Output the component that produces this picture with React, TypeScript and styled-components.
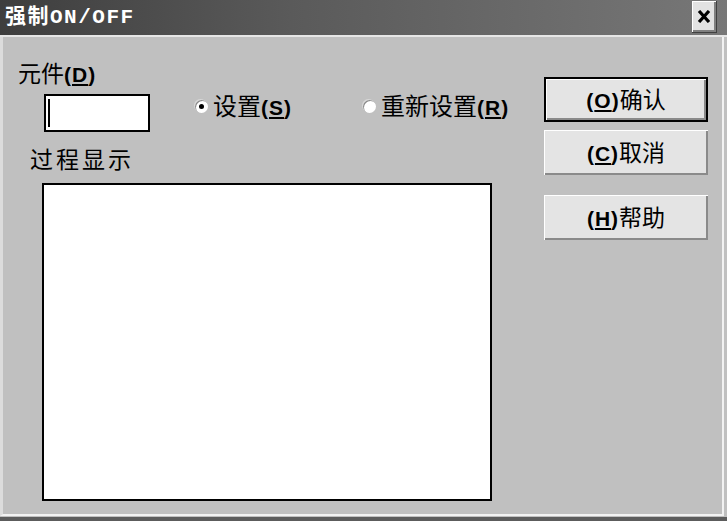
import styled, { createGlobalStyle } from "styled-components";

const GlobalStyle = createGlobalStyle`
  html, body {
    margin: 0;
    padding: 0;
    background: #c0c0c0;
  }
  body {
    font-family: "Noto Sans CJK SC", "Liberation Sans", sans-serif;
    color: #000;
  }
`;

const Window = styled.div`
  width: 727px;
  height: 521px;
  box-sizing: border-box;
  display: flex;
  flex-direction: column;
  background: #c0c0c0;
  border-bottom: 4px solid #5c5c5c;
  overflow: hidden;
`;

const TitleBar = styled.div`
  height: 37px;
  flex-shrink: 0;
  box-sizing: border-box;
  display: flex;
  align-items: flex-start;
  justify-content: space-between;
  padding: 1px 10px 0 5px;
  background: linear-gradient(to right, #3e3e3e, #5a5a5a 40%, #777);
  border-bottom: 2px solid #e6e6e6;
`;

const Title = styled.span`
  margin-top: 5px;
  color: #fff;
  font-family: "Liberation Mono", "Noto Sans CJK SC", monospace;
  font-weight: bold;
  font-size: 21px;
  line-height: 24px;
  letter-spacing: 1.5px;
`;

const CloseButton = styled.div`
  width: 25px;
  height: 32px;
  box-sizing: border-box;
  display: flex;
  align-items: center;
  justify-content: center;
  background: #e2e2e2;
  box-shadow: inset 1px 1px 0 #fff, inset -2px -2px 0 #808080;
  border-right: 1px solid #404040;
  border-bottom: 1px solid #404040;
`;

const Body = styled.div`
  flex: 1;
  display: flex;
  margin: 0 3px 1px 0;
  border-left: 3px solid #dcdcdc;
  border-right: 2px solid #f2f2f2;
  border-bottom: 2px solid #f2f2f2;
`;

const LeftPane = styled.div`
  width: 541px;
  flex-shrink: 0;
  box-sizing: border-box;
  display: flex;
  flex-direction: column;
  padding: 22px 0 0 15px;
`;

const Label = styled.div<{ $indent?: number; $spacing?: number; $top?: number }>`
  margin: ${(p) => p.$top ?? 0}px 0 0 ${(p) => p.$indent ?? 0}px;
  font-size: 23px;
  line-height: 26px;
  letter-spacing: ${(p) => p.$spacing ?? 0}px;
  white-space: nowrap;
`;

const Key = styled.span`
  font-family: "Liberation Sans", Arial, sans-serif;
  font-weight: bold;
  font-size: 21px;
  letter-spacing: 1px;
`;

const FieldRow = styled.div`
  display: flex;
  align-items: flex-start;
  margin: 6px 0 0 26px;
`;

const TextBox = styled.div`
  width: 106px;
  height: 38px;
  box-sizing: border-box;
  display: flex;
  padding: 3px 2px;
  background: #fff;
  border: 2px solid #000;
`;

const Caret = styled.span`
  width: 2px;
  background: #000;
`;

const RadioItem = styled.div<{ $gap: number; $width?: number }>`
  display: flex;
  align-items: center;
  gap: 5px;
  margin: -2px 0 0 ${(p) => p.$gap}px;
  width: ${(p) => (p.$width ? `${p.$width}px` : "auto")};
  height: 28px;
  font-size: 24px;
  line-height: 28px;
  white-space: nowrap;
`;

const RadioDot = styled.span<{ $checked?: boolean }>`
  width: 13px;
  height: 13px;
  box-sizing: border-box;
  flex-shrink: 0;
  display: flex;
  align-items: center;
  justify-content: center;
  border-radius: 50%;
  background: #fff;
  box-shadow: inset 1px 1px 0 #8a8a8a, -1px -1px 0 #d8d8d8;

  &::after {
    content: "";
    width: 5px;
    height: 5px;
    border-radius: 50%;
    background: ${(p) => (p.$checked ? "#000" : "transparent")};
  }
`;

const ListBox = styled.div`
  width: 450px;
  height: 318px;
  box-sizing: border-box;
  margin: 12px 0 0 24px;
  background: #fff;
  border: 2px solid #000;
`;

const RightPane = styled.div`
  display: flex;
  flex-direction: column;
  padding-top: 40px;
`;

const Button = styled.div<{ $default?: boolean; $space?: number }>`
  width: 164px;
  height: 45px;
  box-sizing: border-box;
  margin-top: ${(p) => p.$space ?? 0}px;
  display: flex;
  align-items: center;
  justify-content: center;
  background: #e4e4e4;
  border: ${(p) => (p.$default ? "2px solid #000" : "none")};
  box-shadow: inset 1px 1px 0 #fff, inset -2px -2px 0 #8a8a8a;
  font-size: 23px;
  line-height: 26px;
  white-space: nowrap;
`;

function Mnemonic({ letter }: { letter: string }) {
  return (
    <Key>
      (<u>{letter}</u>)
    </Key>
  );
}

function App() {
  return (
    <>
      <GlobalStyle />
      <Window>
        <TitleBar>
          <Title>强制ON/OFF</Title>
          <CloseButton>
            <svg width="14" height="13" viewBox="0 0 14 13">
              <path d="M2 1 L12 12 M12 1 L2 12" stroke="#000" strokeWidth="3.2" />
            </svg>
          </CloseButton>
        </TitleBar>
        <Body>
          <LeftPane>
            <Label>
              元件<Mnemonic letter="D" />
            </Label>
            <FieldRow>
              <TextBox>
                <Caret />
              </TextBox>
              <RadioItem $gap={45} $width={168}>
                <RadioDot $checked />
                <span>
                  设置<Mnemonic letter="S" />
                </span>
              </RadioItem>
              <RadioItem $gap={0}>
                <RadioDot />
                <span>
                  重新设置<Mnemonic letter="R" />
                </span>
              </RadioItem>
            </FieldRow>
            <Label $indent={12} $spacing={3} $top={13}>
              过程显示
            </Label>
            <ListBox />
          </LeftPane>
          <RightPane>
            <Button $default>
              <span>
                <Mnemonic letter="O" />确认
              </span>
            </Button>
            <Button $space={8}>
              <span>
                <Mnemonic letter="C" />取消
              </span>
            </Button>
            <Button $space={20}>
              <span>
                <Mnemonic letter="H" />帮助
              </span>
            </Button>
          </RightPane>
        </Body>
      </Window>
    </>
  );
}

export default App;
